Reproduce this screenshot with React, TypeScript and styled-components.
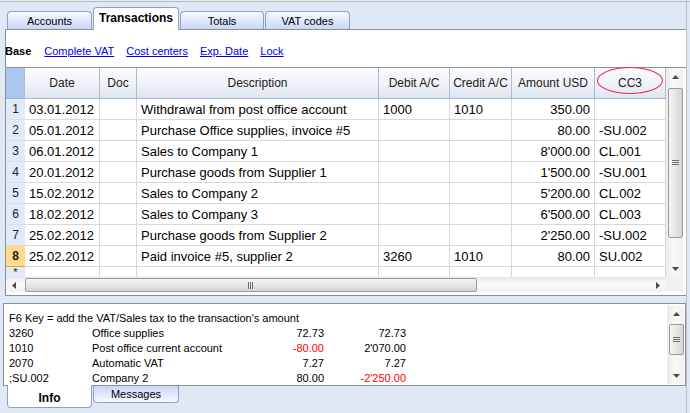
import styled, { createGlobalStyle } from "styled-components";

const GlobalStyle = createGlobalStyle`
  html, body {
    margin: 0;
    padding: 0;
    background: #dfe9f5;
  }
  body {
    font-family: "Liberation Sans", Arial, sans-serif;
    color: #000;
  }
  * {
    box-sizing: border-box;
  }
`;

type Row = {
  no: number;
  date: string;
  doc: string;
  desc: string;
  debit: string;
  credit: string;
  amount: string;
  cc3: string;
};

const rows: Row[] = [
  { no: 1, date: "03.01.2012", doc: "", desc: "Withdrawal from post office account", debit: "1000", credit: "1010", amount: "350.00", cc3: "" },
  { no: 2, date: "05.01.2012", doc: "", desc: "Purchase Office supplies, invoice #5", debit: "", credit: "", amount: "80.00", cc3: "-SU.002" },
  { no: 3, date: "06.01.2012", doc: "", desc: "Sales to Company 1", debit: "", credit: "", amount: "8'000.00", cc3: "CL.001" },
  { no: 4, date: "20.01.2012", doc: "", desc: "Purchase goods from Supplier 1", debit: "", credit: "", amount: "1'500.00", cc3: "-SU.001" },
  { no: 5, date: "15.02.2012", doc: "", desc: "Sales to Company 2", debit: "", credit: "", amount: "5'200.00", cc3: "CL.002" },
  { no: 6, date: "18.02.2012", doc: "", desc: "Sales to Company 3", debit: "", credit: "", amount: "6'500.00", cc3: "CL.003" },
  { no: 7, date: "25.02.2012", doc: "", desc: "Purchase goods from Supplier 2", debit: "", credit: "", amount: "2'250.00", cc3: "-SU.002" },
  { no: 8, date: "25.02.2012", doc: "", desc: "Paid invoice #5, supplier 2", debit: "3260", credit: "1010", amount: "80.00", cc3: "SU.002" },
];

const infoRows = [
  { code: "3260", name: "Office supplies", a: "72.73", b: "72.73" },
  { code: "1010", name: "Post office current account", a: "-80.00", b: "2'070.00" },
  { code: "2070", name: "Automatic VAT", a: "7.27", b: "7.27" },
  { code: ";SU.002", name: "Company 2", a: "80.00", b: "-2'250.00" },
];

const COLS = "19px 75px 37px 242px 71px 62px 83px 71px";

const Screen = styled.div`
  position: relative;
  width: 690px;
  height: 413px;
  overflow: hidden;
  box-shadow: inset 0 1px 0 #ececec, inset 0 2px 0 #b4b8bf;
`;

const FrameLine = styled.div`
  position: absolute;
  top: 0;
  right: 3px;
  bottom: 0;
  width: 1px;
  background: #b8bfc8;
`;

const TabRow = styled.div<{ $top?: boolean }>`
  display: flex;
  align-items: ${(p) => (p.$top ? "flex-end" : "flex-start")};
  height: ${(p) => (p.$top ? "29px" : "auto")};
  padding-left: 7px;
  position: relative;
  z-index: 2;
`;

const Tab = styled.div<{ $active?: boolean; $top?: boolean; $w: number }>`
  width: ${(p) => p.$w}px;
  height: ${(p) => (p.$active ? 22 : p.$top ? 18 : 17)}px;
  margin-right: 1px;
  display: flex;
  align-items: center;
  justify-content: center;
  font-size: ${(p) => (p.$active ? "12px" : "11px")};
  font-weight: ${(p) => (p.$active ? "bold" : "normal")};
  border: 1px solid #8ea2c2;
  border-radius: ${(p) => (p.$top ? "4px 4px 0 0" : "0 0 4px 4px")};
  background: ${(p) =>
    p.$active
      ? "#ffffff"
      : p.$top
      ? "linear-gradient(#f6f8fe, #c9d8f8)"
      : "linear-gradient(#c9d8f8, #f6f8fe)"};
  ${(p) => (p.$top ? "border-bottom: none;" : "border-top: none;")}
  ${(p) => (p.$active && p.$top ? "margin-bottom: -1px; height: 23px; padding-bottom: 3px;" : "")}
  ${(p) => (p.$active && !p.$top ? "margin-top: -1px; height: 23px; padding-top: 3px;" : "")}
`;

const MainPanel = styled.div`
  margin-left: 5px;
  width: 682px;
  height: 267px;
  border: 1px solid #8c9096;
  background: #fff;
  padding-bottom: 3px;
`;

const LinkBar = styled.div`
  height: 37px;
  display: flex;
  align-items: center;
  gap: 12px;
  padding: 4px 0 0 0;
  margin-left: -1px;
  font-size: 11px;
`;

const BaseLabel = styled.span`
  font-weight: bold;
  margin-right: 1px;
`;

const Link = styled.a`
  color: #0000ee;
  text-decoration: underline;
  cursor: pointer;
`;

const GridFrame = styled.div`
  border-top: 1px solid #8c9096;
  display: flex;
  flex-direction: column;
`;

const GridBody = styled.div`
  display: flex;
  height: 209px;
`;

const Table = styled.div`
  width: 660px;
  overflow: visible;
  position: relative;
`;

const TableClip = styled.div`
  height: 209px;
  overflow: hidden;
`;

const TableRow = styled.div<{ $h: number }>`
  display: grid;
  grid-template-columns: ${COLS};
  height: ${(p) => p.$h}px;
`;

const HeadCell = styled.div<{ $corner?: boolean }>`
  display: flex;
  align-items: center;
  justify-content: center;
  font-size: 12px;
  color: #1a1a1a;
  border-right: 1px solid #a9bdd5;
  border-bottom: 1px solid #a3b8d0;
  background: ${(p) =>
    p.$corner ? "#aac6ee" : "linear-gradient(#fbfcfe, #eef2f7 55%, #dee6f0)"};
  white-space: nowrap;
`;

const RowNum = styled.div<{ $current?: boolean }>`
  display: flex;
  align-items: center;
  justify-content: center;
  font-size: 12px;
  font-weight: ${(p) => (p.$current ? "bold" : "normal")};
  background: ${(p) => (p.$current ? "#ffd98c" : "#e1ebf7")};
  border-bottom: 1px solid ${(p) => (p.$current ? "#f0a236" : "#d6dfea")};
  color: #222;
`;

const Cell = styled.div<{ $right?: boolean }>`
  display: flex;
  align-items: center;
  justify-content: ${(p) => (p.$right ? "flex-end" : "flex-start")};
  padding: 0 4px 0 4px;
  font-size: 13px;
  border-right: 1px solid #d9d9d9;
  border-bottom: 1px solid #d9d9d9;
  white-space: nowrap;
  overflow: hidden;
`;

const StarCell = styled(RowNum)`
  font-size: 11px;
  align-items: flex-start;
  line-height: 10px;
  border-bottom: none;
`;

const BlankCell = styled.div`
  border-right: 1px solid #d9d9d9;
`;

const Highlight = styled.div`
  position: absolute;
  left: 591px;
  top: -1px;
  width: 66px;
  height: 27px;
  border: 1.5px solid #e8284e;
  border-radius: 50%;
  pointer-events: none;
`;

const VScroll = styled.div<{ $h: number }>`
  width: 17px;
  height: ${(p) => p.$h}px;
  background: linear-gradient(90deg, #ececec, #f8f8f8 40%, #f1f1f1);
  border-left: 1px solid #ededed;
  display: flex;
  flex-direction: column;
  align-items: center;
`;

const ArrowBox = styled.div`
  width: 16px;
  height: 17px;
  display: flex;
  align-items: center;
  justify-content: center;
  flex: none;
`;

const VThumb = styled.div<{ $h: number; $mt: number }>`
  width: 15px;
  height: ${(p) => p.$h}px;
  margin-top: ${(p) => p.$mt}px;
  border: 1px solid #9c9c9c;
  border-radius: 2px;
  background: linear-gradient(90deg, #f4f4f4, #e6e6e6 50%, #d4d4d4);
  display: flex;
  align-items: center;
  justify-content: center;
  flex: none;
`;

const HScrollRow = styled.div`
  display: flex;
  height: 15px;
`;

const HScroll = styled.div`
  width: 660px;
  height: 15px;
  display: flex;
  align-items: center;
  background: linear-gradient(#ececec, #f8f8f8 40%, #f1f1f1);
  border-top: 1px solid #e4e4e4;
`;

const HThumb = styled.div`
  margin-left: 3px;
  width: 452px;
  height: 14px;
  border: 1px solid #9c9c9c;
  border-radius: 2px;
  background: linear-gradient(#f4f4f4, #e6e6e6 50%, #d4d4d4);
  display: flex;
  align-items: center;
  justify-content: center;
`;

const Corner = styled.div`
  width: 17px;
  background: #f0f0f0;
`;

const Spacer = styled.div`
  flex: 1;
`;

const InfoPanel = styled.div`
  margin: 7px 0 0 3px;
  width: 683px;
  height: 83px;
  border: 1px solid #8c9096;
  background: #fff;
  display: flex;
  position: relative;
  z-index: 1;
`;

const InfoText = styled.div`
  flex: 1;
  padding: 7px 0 0 5px;
  font-size: 11px;
  line-height: 15px;
`;

const InfoLine = styled.div`
  display: grid;
  grid-template-columns: 83px 170px 62px 82px;
  white-space: nowrap;
`;

const Num = styled.span<{ $neg?: boolean }>`
  text-align: right;
  color: ${(p) => (p.$neg ? "#ff0000" : "#000")};
`;

const InfoScroll = styled(VScroll)`
  margin: 1px 1px 1px 0;
`;

const Up = () => (
  <svg width="7" height="4" viewBox="0 0 7 4">
    <path d="M3.5 0 L7 4 L0 4 Z" fill="#4a4a4a" />
  </svg>
);
const Down = () => (
  <svg width="7" height="4" viewBox="0 0 7 4">
    <path d="M0 0 L7 0 L3.5 4 Z" fill="#4a4a4a" />
  </svg>
);
const Left = () => (
  <svg width="4" height="7" viewBox="0 0 4 7">
    <path d="M4 0 L4 7 L0 3.5 Z" fill="#4a4a4a" />
  </svg>
);
const Right = () => (
  <svg width="4" height="7" viewBox="0 0 4 7">
    <path d="M0 0 L4 3.5 L0 7 Z" fill="#4a4a4a" />
  </svg>
);
const GripH = () => (
  <svg width="7" height="6" viewBox="0 0 7 6">
    <path d="M0 0.5 H7 M0 2.5 H7 M0 4.5 H7" stroke="#6d6d6d" strokeWidth="1" />
  </svg>
);
const GripV = () => (
  <svg width="6" height="7" viewBox="0 0 6 7">
    <path d="M0.5 0 V7 M2.5 0 V7 M4.5 0 V7" stroke="#6d6d6d" strokeWidth="1" />
  </svg>
);

const headers = ["Date", "Doc", "Description", "Debit A/C", "Credit A/C", "Amount USD", "CC3"];

export default function App() {
  return (
    <>
      <GlobalStyle />
      <Screen>
        <FrameLine />
        <TabRow $top>
          <Tab $top $w={85}>Accounts</Tab>
          <Tab $top $active $w={86}>Transactions</Tab>
          <Tab $top $w={84}>Totals</Tab>
          <Tab $top $w={85}>VAT codes</Tab>
        </TabRow>
        <MainPanel>
          <LinkBar>
            <BaseLabel>Base</BaseLabel>
            <Link>Complete VAT</Link>
            <Link>Cost centers</Link>
            <Link>Exp. Date</Link>
            <Link>Lock</Link>
          </LinkBar>
          <GridFrame>
            <GridBody>
              <Table>
                <TableClip>
                  <TableRow $h={31}>
                    <HeadCell $corner />
                    {headers.map((h) => (
                      <HeadCell key={h}>{h}</HeadCell>
                    ))}
                  </TableRow>
                  {rows.map((r) => (
                    <TableRow $h={21} key={r.no}>
                      <RowNum $current={r.no === 8}>{r.no}</RowNum>
                      <Cell>{r.date}</Cell>
                      <Cell>{r.doc}</Cell>
                      <Cell>{r.desc}</Cell>
                      <Cell>{r.debit}</Cell>
                      <Cell>{r.credit}</Cell>
                      <Cell $right>{r.amount}</Cell>
                      <Cell>{r.cc3}</Cell>
                    </TableRow>
                  ))}
                  <TableRow $h={10}>
                    <StarCell>*</StarCell>
                    <BlankCell />
                    <BlankCell />
                    <BlankCell />
                    <BlankCell />
                    <BlankCell />
                    <BlankCell />
                    <BlankCell />
                  </TableRow>
                </TableClip>
                <Highlight />
              </Table>
              <VScroll $h={209}>
                <ArrowBox>
                  <Up />
                </ArrowBox>
                <VThumb $h={150} $mt={3}>
                  <GripH />
                </VThumb>
                <Spacer />
                <ArrowBox>
                  <Down />
                </ArrowBox>
              </VScroll>
            </GridBody>
            <HScrollRow>
              <HScroll>
                <ArrowBox>
                  <Left />
                </ArrowBox>
                <HThumb>
                  <GripV />
                </HThumb>
                <Spacer />
                <ArrowBox>
                  <Right />
                </ArrowBox>
              </HScroll>
              <Corner />
            </HScrollRow>
          </GridFrame>
        </MainPanel>
        <InfoPanel>
          <InfoText>
            <div>F6 Key = add the VAT/Sales tax to the transaction's amount</div>
            {infoRows.map((r) => (
              <InfoLine key={r.code}>
                <span>{r.code}</span>
                <span>{r.name}</span>
                <Num $neg={r.a.startsWith("-")}>{r.a}</Num>
                <Num $neg={r.b.startsWith("-")}>{r.b}</Num>
              </InfoLine>
            ))}
          </InfoText>
          <InfoScroll $h={79}>
            <ArrowBox>
              <Up />
            </ArrowBox>
            <VThumb $h={31} $mt={2}>
              <GripH />
            </VThumb>
            <Spacer />
            <ArrowBox>
              <Down />
            </ArrowBox>
          </InfoScroll>
        </InfoPanel>
        <TabRow>
          <Tab $active $w={85}>Info</Tab>
          <Tab $w={86}>Messages</Tab>
        </TabRow>
      </Screen>
    </>
  );
}
